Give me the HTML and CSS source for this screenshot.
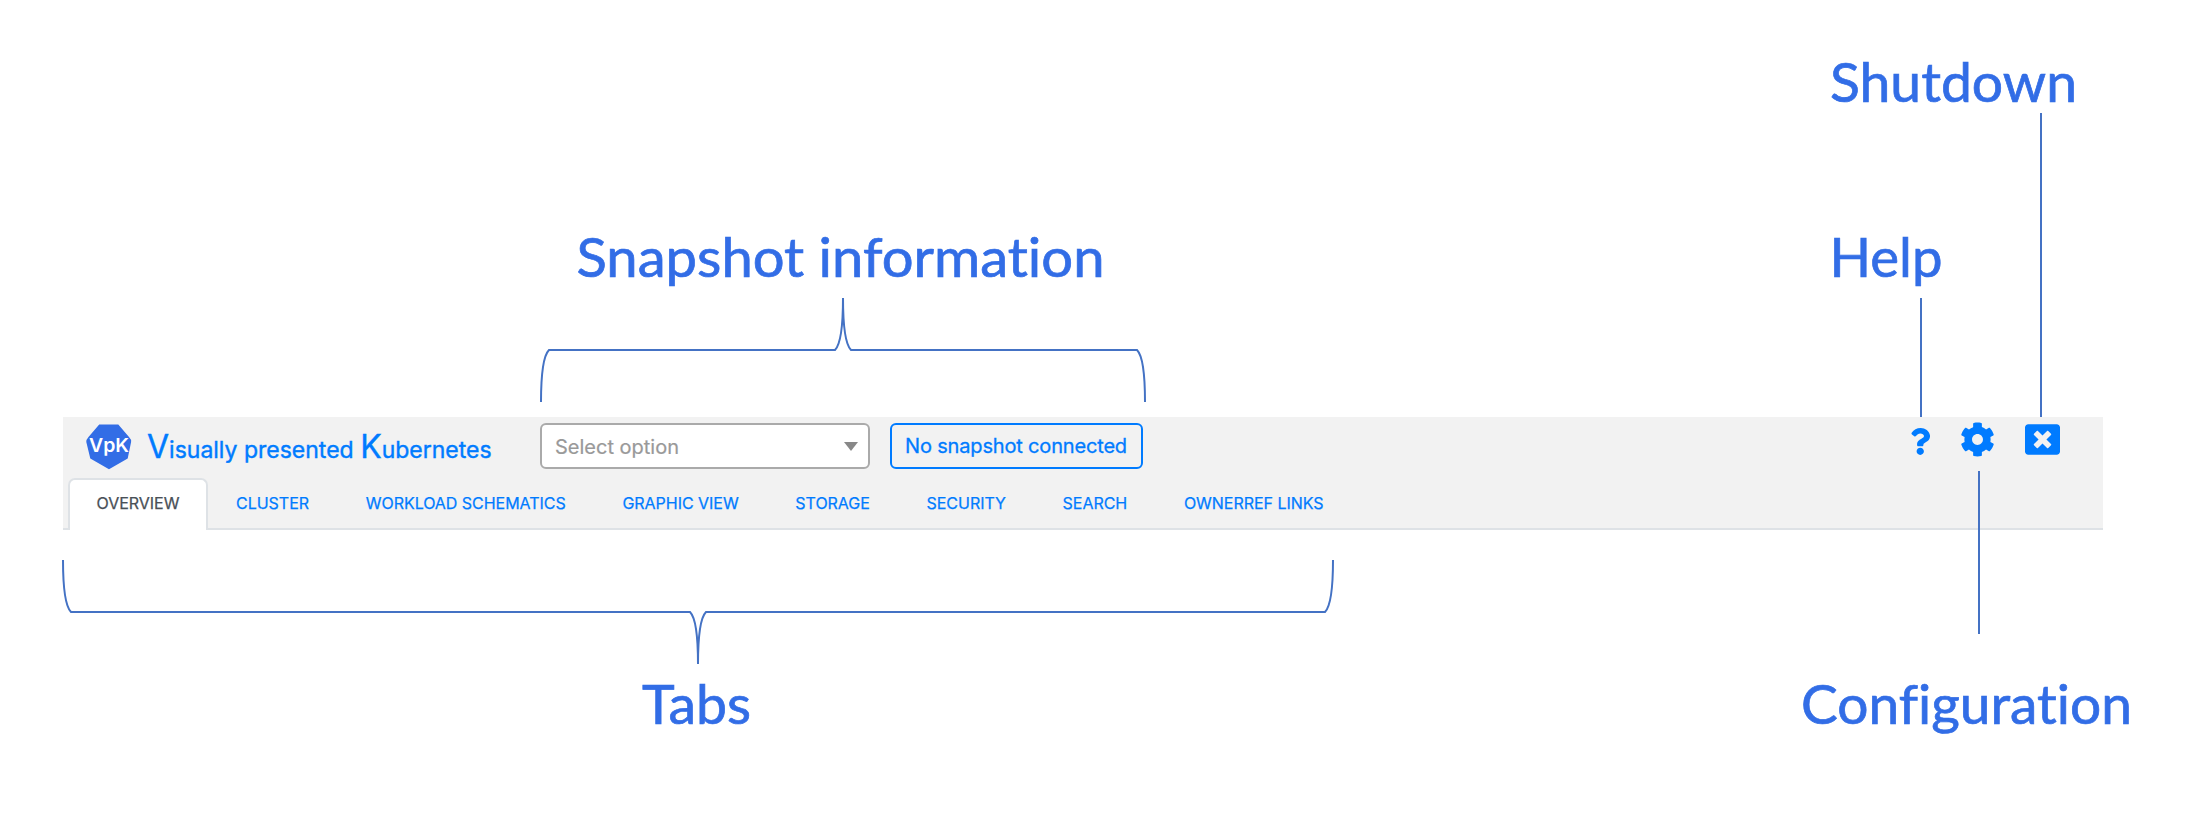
FILE: index.html
```html
<!DOCTYPE html>
<html lang="en">
<head>
<meta charset="utf-8">
<title>Visually presented Kubernetes</title>
<link rel="stylesheet" href="styles.css">
</head>
<body>
<main class="page">
  <header class="app-header">
    <div class="toolbar">
      <svg class="logo" viewBox="0 0 48 46" role="img">
        <path class="logo-shape" d="M14.2 .5H33.3L44 13Q46.5 15.5 46.1 18L42.7 34.5L24 45.3L5.3 34.5L1.3 18Q1.2 15.5 3.5 13Z"/>
        <text class="logo-text" x="4" y="27.5" textLength="40" lengthAdjust="spacingAndGlyphs">VpK</text>
      </svg>
      <h1 class="title"><span class="initial">V</span>isually presented <span class="initial">K</span>ubernetes</h1>
      <div class="select"><span>Select option</span><i class="caret"></i></div>
      <button class="status">No snapshot connected</button>
      <div class="actions">
        <svg class="icon-help" viewBox="0 0 384 512"><path d="M202.021 0C122.202 0 70.503 32.703 29.914 91.026c-7.363 10.58-5.093 25.086 5.178 32.874l43.138 32.709c10.373 7.865 25.132 6.026 33.253-4.148 25.049-31.381 43.63-49.449 82.757-49.449 30.764 0 68.816 19.799 68.816 49.631 0 22.552-18.617 34.134-48.993 51.164-35.423 19.86-82.299 44.576-82.299 106.405V320c0 13.255 10.745 24 24 24h72.471c13.255 0 24-10.745 24-24v-5.773c0-42.86 125.268-44.645 125.268-160.627C377.504 66.256 286.902 0 202.021 0zM192 373.459c-38.196 0-69.271 31.075-69.271 69.271 0 38.195 31.075 69.27 69.271 69.27s69.271-31.075 69.271-69.271-31.075-69.27-69.271-69.27z"/></svg>
        <svg class="icon-gear" viewBox="0 0 512 512"><path d="M487.4 315.7l-42.6-24.6c4.3-23.2 4.3-47 0-70.2l42.6-24.6c4.9-2.8 7.1-8.6 5.5-14-11.1-35.6-30-67.8-54.7-94.6-3.8-4.1-10-5.1-14.8-2.3L380.8 110c-17.9-15.4-38.5-27.3-60.8-35.1V25.8c0-5.6-3.9-10.5-9.4-11.7-36.7-8.2-74.3-7.8-109.2 0-5.5 1.2-9.4 6.1-9.4 11.7V75c-22.2 7.9-42.8 19.8-60.8 35.1L88.7 85.5c-4.9-2.8-11-1.9-14.8 2.3-24.7 26.7-43.6 58.9-54.7 94.6-1.7 5.4.6 11.2 5.5 14L67.3 221c-4.3 23.2-4.3 47 0 70.2l-42.6 24.6c-4.9 2.8-7.1 8.6-5.5 14 11.1 35.6 30 67.8 54.7 94.6 3.8 4.1 10 5.1 14.8 2.3l42.6-24.6c17.9 15.4 38.5 27.3 60.8 35.1v49.2c0 5.6 3.9 10.5 9.4 11.7 36.7 8.2 74.3 7.8 109.2 0 5.5-1.2 9.4-6.1 9.4-11.7v-49.2c22.2-7.9 42.8-19.8 60.8-35.1l42.6 24.6c4.9 2.8 11 1.9 14.8-2.3 24.7-26.7 43.6-58.9 54.7-94.6 1.5-5.5-.7-11.3-5.6-14.1zM256 336c-44.1 0-80-35.9-80-80s35.9-80 80-80 80 35.9 80 80-35.9 80-80 80z"/></svg>
        <svg class="icon-close" viewBox="0 0 512 512"><path d="M464 32H48C21.5 32 0 53.5 0 80v352c0 26.5 21.5 48 48 48h416c26.5 0 48-21.5 48-48V80c0-26.5-21.5-48-48-48zm-83.6 290.5c4.8 4.8 4.8 12.6 0 17.4l-40.5 40.5c-4.8 4.8-12.6 4.8-17.4 0L256 313.3l-66.5 67.1c-4.8 4.8-12.6 4.8-17.4 0l-40.5-40.5c-4.8-4.8-4.8-12.6 0-17.4l67.1-66.5-67.1-66.5c-4.8-4.8-4.8-12.6 0-17.4l40.5-40.5c4.8-4.8 12.6-4.8 17.4 0l66.5 67.1 66.5-67.1c4.8-4.8 12.6-4.8 17.4 0l40.5 40.5c4.8 4.8 4.8 12.6 0 17.4L313.3 256l67.1 66.5z"/></svg>
      </div>
    </div>
    <nav class="tabs">
      <a class="tab active">OVERVIEW</a>
      <a class="tab">CLUSTER</a>
      <a class="tab">WORKLOAD SCHEMATICS</a>
      <a class="tab">GRAPHIC VIEW</a>
      <a class="tab">STORAGE</a>
      <a class="tab">SECURITY</a>
      <a class="tab">SEARCH</a>
      <a class="tab">OWNERREF LINKS</a>
    </nav>
  </header>
  <svg class="callouts" viewBox="0 0 2200 830">
    <g class="lines">
      <path d="M541 402Q541 358 549 350H835Q843 342 843 298Q843 342 851 350H1137Q1145 358 1145 402"/>
      <path d="M63 560Q63 604 71 612H690Q698 620 698 664Q698 620 706 612H1325Q1333 604 1333 560"/>
      <path d="M2041 113V417M1921 298V417M1979 471V634"/>
    </g>
    <g class="labels">
      <text x="576.5" y="277" textLength="528" lengthAdjust="spacingAndGlyphs">Snapshot information</text>
      <text x="1830" y="102" textLength="247" lengthAdjust="spacingAndGlyphs">Shutdown</text>
      <text x="1829.5" y="277" textLength="113" lengthAdjust="spacingAndGlyphs">Help</text>
      <text x="642" y="724" textLength="109" lengthAdjust="spacingAndGlyphs">Tabs</text>
      <text x="1801" y="724" textLength="331" lengthAdjust="spacingAndGlyphs">Configuration</text>
    </g>
  </svg>
</main>
</body>
</html>
```
FILE: styles.css
```css
* { box-sizing: border-box; }
body { margin: 0; background: #fff; font-family: Inter, "Liberation Sans", sans-serif; }
.page { position: relative; width: 2200px; height: 830px; padding: 417px 97px 0 63px; overflow: hidden; }
.app-header { height: 113px; background: #f2f2f2; display: flex; flex-direction: column; }
.toolbar { height: 61px; display: flex; align-items: flex-start; padding: 6px 43px 0 22px; }
.logo { width: 48px; height: 46px; margin-top: 1px; flex: none; }
.logo-shape { fill: #326de6; }
.logo-text { fill: #fff; font-size: 19px; font-weight: 600; }
.title { width: 393px; flex: none; margin: 0; padding: 7px 0 0 14px; color: #007bff; font-size: 23px; font-weight: 400; line-height: 40px; white-space: nowrap; -webkit-text-stroke: .4px #007bff; }
.initial { font-size: 32px; line-height: 1; }
.select { width: 330px; height: 46px; margin-left: 14px; padding: 2px 10px 0 13px; display: flex; align-items: center; justify-content: space-between; background: #fff; border: 2px solid #aaa; border-radius: 6px; color: #999; font-size: 20px; -webkit-text-stroke: .2px #999; }
.caret { margin-top: -2px; border: 7px solid transparent; border-top: 9px solid #888; border-bottom: 0; }
.status { width: 253px; height: 46px; margin-left: 20px; padding: 0 1px 1px 0; background: transparent; border: 2px solid #007bff; border-radius: 6px; color: #007bff; font: 400 20px Inter, sans-serif; letter-spacing: -.17px; white-space: nowrap; -webkit-text-stroke: .3px #007bff; }
.actions { margin-left: auto; display: flex; fill: #007bff; }
.icon-help { width: 20.5px; height: 27px; margin: 5px 30px 0 0; }
.icon-gear { width: 35px; height: 35px; margin: -1px 30px 0 0; }
.icon-close { width: 35px; height: 35px; margin-top: -1px; }
.tabs { height: 52px; padding-left: 5px; display: flex; border-bottom: 2px solid #dee2e6; }
.tab { height: 52px; padding: 0 26.2px 0 26.5px; border: 2px solid transparent; border-bottom: 0; border-radius: 7px 7px 0 0; color: #007bff; font-size: 16px; line-height: 46px; white-space: nowrap; letter-spacing: -.03px; -webkit-text-stroke: .25px currentColor; }
.active { background: #fff; border-color: #dee2e6; color: #495057; }
.callouts { position: absolute; left: 0; top: 0; width: 2200px; height: 830px; pointer-events: none; }
.lines { fill: none; stroke: #4472c4; stroke-width: 2; }
.labels { fill: #326de6; font: 400 54px Lato, sans-serif; font-variant-ligatures: none; stroke: #326de6; stroke-width: .7px; }
```
